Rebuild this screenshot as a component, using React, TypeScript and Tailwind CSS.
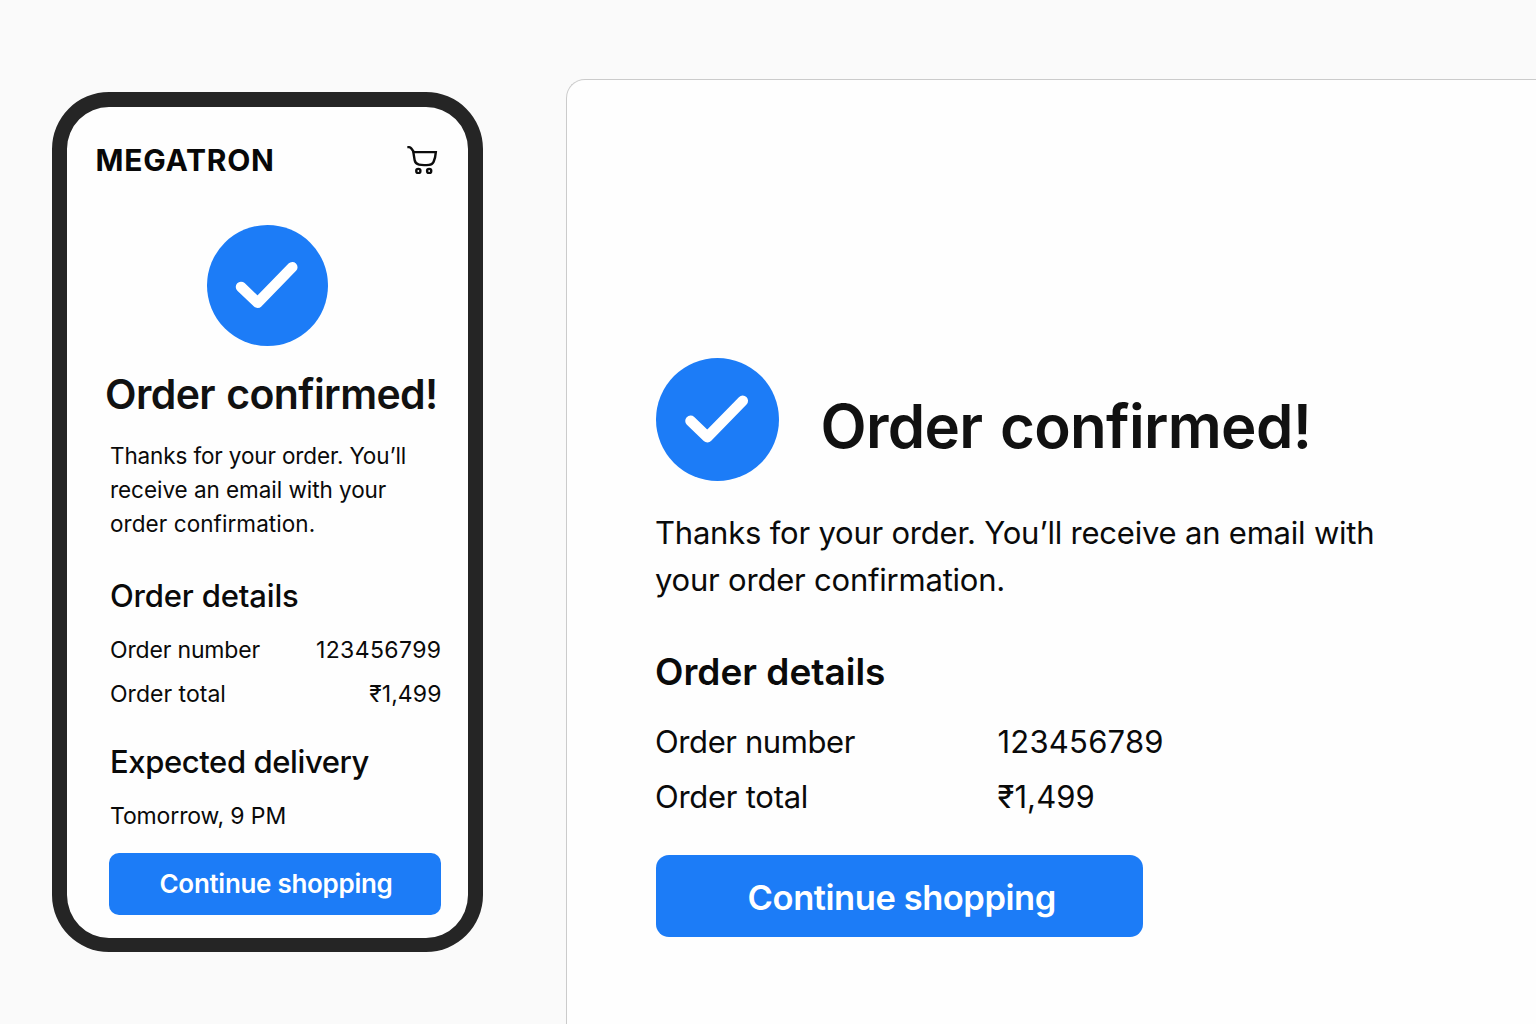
import type { ReactNode } from 'react'

function CheckBadge({ className }: { className: string }) {
  return (
    <svg viewBox="0 0 121 121" className={className} aria-hidden="true">
      <circle cx="60.5" cy="60.5" r="60.5" fill="#1c7cf7" />
      <path
        d="M34 61.9 50.6 77.8 85.3 42.2"
        fill="none"
        stroke="#fff"
        strokeWidth="10.5"
        strokeLinecap="round"
        strokeLinejoin="round"
      />
    </svg>
  )
}

function CartIcon() {
  return (
    <svg
      viewBox="50 46 93 86"
      className="h-[28.67px] w-[31px] shrink-0"
      fill="none"
      stroke="#0c0c0c"
      strokeWidth="7.2"
      strokeLinecap="butt"
      strokeLinejoin="miter"
      aria-hidden="true"
    >
      <path d="M51 49.500H55Q60 49.500 63 53.500L70 63" />
      <path d="M69 64.500H136.500Q135 83 130 93Q126 101.500 116 102.500Q98 104.500 86 102Q75 99.500 73 89Z" />
      <circle cx="84" cy="121" r="6.300" />
      <circle cx="116.500" cy="121" r="6.300" />
    </svg>
  )
}

function Row({ children, className = '' }: { children: ReactNode; className?: string }) {
  return <div className={`flex h-[30px] items-center justify-between text-[23px] ${className}`}>{children}</div>
}

function Phone() {
  return (
    <section className="mt-[92px] ml-[52px] h-[860px] w-[430.5px] shrink-0 rounded-[57px] border-[15px] border-b-[14px] border-[#252525] bg-[#fefefe]">
      <header className="mt-[38px] flex h-[30px] items-center justify-between pr-[30px] pl-[28.5px]">
        <div className="text-[30px] leading-[30px] font-bold tracking-[0.75px] text-[#080808]">MEGATRON</div>
        <CartIcon />
      </header>

      <CheckBadge className="mx-auto mt-[50px] size-[121px]" />

      <h1 className="mt-[23px] ml-[38px] text-[41px] leading-[50px] font-semibold tracking-[-0.6px] whitespace-nowrap [word-spacing:1.5px]">
        Order confirmed!
      </h1>

      <div className="mt-[20px] mr-[27px] ml-[43px] text-[#0a0a0a]">
        <p className="text-[22.5px] leading-[34px] tracking-[-0.13px] whitespace-nowrap">
          Thanks for your order. You’ll
          <br />
          <span className="tracking-[-0.05px]">receive an email with your</span>
          <br />
          <span className="tracking-[0.07px]">order confirmation.</span>
        </p>

        <h2 className="mt-[35px] text-[31px] leading-[40px] font-medium tracking-[-0.17px]">Order details</h2>
        <Row className="mt-[19px]">
          <span className="tracking-[-0.17px]">Order number</span>
          <span className="-mr-px tracking-[0.4px]">123456799</span>
        </Row>
        <Row className="mt-[14px]">
          <span className="tracking-[0.02px]">Order total</span>
          <span className="-mr-px tracking-[0.08px]">₹1,499</span>
        </Row>

        <h2 className="mt-[33px] text-[31px] leading-[40px] font-medium tracking-[-0.4px]">Expected delivery</h2>
        <p className="mt-[19px] text-[23px] leading-[30px] tracking-[-0.13px]">Tomorrow, 9 PM</p>
      </div>

      <button className="mt-[22px] ml-[42px] block h-[61.5px] w-[332px] rounded-[10px] bg-[#1c7cf7] text-[26px] leading-[62px] font-semibold tracking-[-0.3px] text-white">
        <span className="relative left-px">Continue shopping</span>
      </button>
    </section>
  )
}

function Desktop() {
  return (
    <section className="mt-[79px] ml-[83.5px] h-[965px] flex-1 rounded-tl-[19px] border-t border-l border-[#cbcbcb] bg-[#fefefe] pt-[278px] pl-[88.5px] text-[#0a0a0a]">
      <div className="flex">
        <CheckBadge className="size-[123px] shrink-0" />
        <h1 className="mt-[33px] ml-[42px] text-[60px] leading-[70px] font-semibold tracking-[-0.68px] whitespace-nowrap text-[#111] [word-spacing:3px]">
          Order confirmed!
        </h1>
      </div>

      <div className="-ml-[0.5px]">
        <p className="mt-[28px] text-[31px] leading-[47px] tracking-[-0.21px] whitespace-nowrap">
          Thanks for your order. You’ll receive an email with
          <br />
          your order confirmation.
        </p>

        <h2 className="mt-[44px] text-[37px] leading-[50px] font-semibold">Order details</h2>

        <dl className="mt-[25px] grid grid-cols-[342.5px_1fr] gap-y-[15px] text-[31px] leading-[40px]">
          <dt className="tracking-[-0.4px]">Order number</dt>
          <dd className="tracking-[0.22px]">123456789</dd>
          <dt className="tracking-[-0.26px]">Order total</dt>
          <dd className="tracking-[0.1px]">₹1,499</dd>
        </dl>
      </div>

      <button className="mt-[37.5px] block h-[82.5px] w-[487.5px] rounded-[13px] bg-[#1c7cf7] pt-[4px] text-[34.5px] font-semibold tracking-[-0.45px] text-white">
        <span className="relative left-[2.5px]">Continue shopping</span>
      </button>
    </section>
  )
}

export default function App() {
  return (
    <main className="flex h-[1024px] w-[1536px] items-start overflow-hidden bg-[#fafafa] font-['Inter',sans-serif] text-[#111]">
      <Phone />
      <Desktop />
    </main>
  )
}
